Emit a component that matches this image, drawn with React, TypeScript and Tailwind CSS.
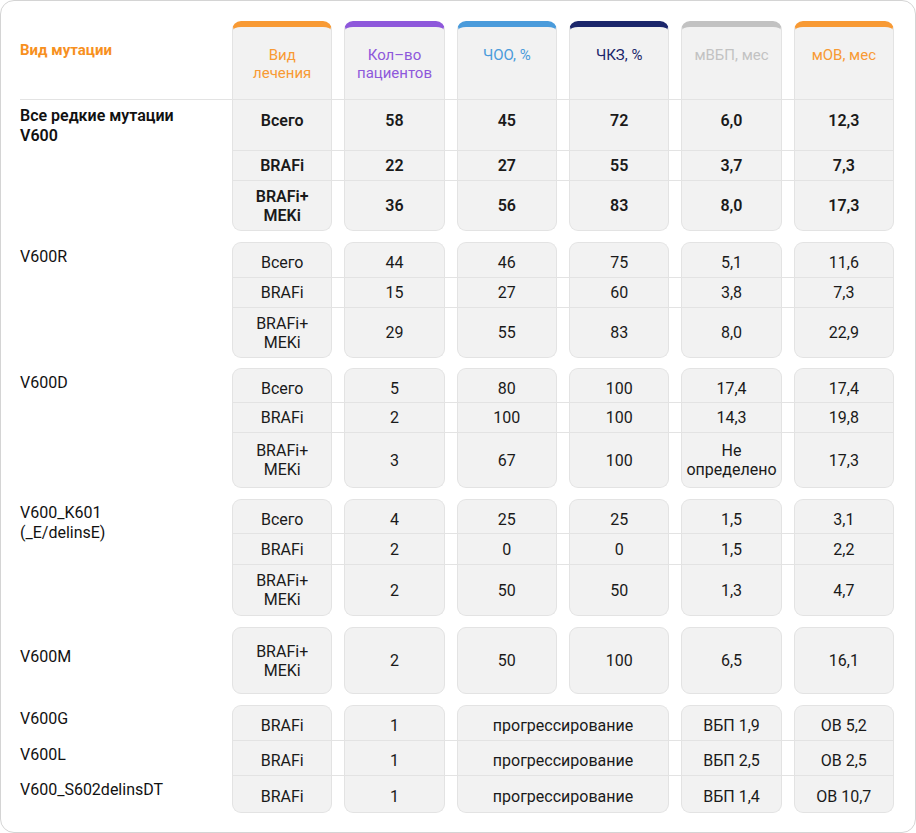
import React from "react";

type Cell = { v: string; span?: number };
type Row = { cells: Cell[]; h: string };
type Group = { label: React.ReactNode; labelPad: string; rows: Row[]; bold?: boolean };

const headers = [
  { title: "Вид\nлечения", bar: "border-t-[#f89a34]", text: "text-[#f89a34]" },
  { title: "Кол–во\nпациентов", bar: "border-t-[#8e58db]", text: "text-[#8e58db]" },
  { title: "ЧОО, %", bar: "border-t-[#4a9bdb]", text: "text-[#4a9bdb]" },
  { title: "ЧКЗ, %", bar: "border-t-[#1b266b]", text: "text-[#1b266b]" },
  { title: "мВБП, мес", bar: "border-t-[#c2c2c2]", text: "text-[#c2c2c2]" },
  { title: "мОВ, мес", bar: "border-t-[#f89a34]", text: "text-[#f89a34]" },
];

const c = (...vals: string[]): Cell[] => vals.map((v) => ({ v }));
const combo = "BRAFi+\nMEKi";

const groups: Group[] = [
  {
    label: (
      <>
        Все редкие мутации
        <br />
        V600
      </>
    ),
    labelPad: "pt-[6px]",
    bold: true,
    rows: [
      { cells: c("Всего", "58", "45", "72", "6,0", "12,3"), h: "h-[51px]" },
      { cells: c("BRAFi", "22", "27", "55", "3,7", "7,3"), h: "h-[30px]" },
      { cells: c(combo, "36", "56", "83", "8,0", "17,3"), h: "h-[50px]" },
    ],
  },
  {
    label: "V600R",
    labelPad: "pt-[5px]",
    rows: [
      { cells: c("Всего", "44", "46", "75", "5,1", "11,6"), h: "h-[36px]" },
      { cells: c("BRAFi", "15", "27", "60", "3,8", "7,3"), h: "h-[30px]" },
      { cells: c(combo, "29", "55", "83", "8,0", "22,9"), h: "h-[50px]" },
    ],
  },
  {
    label: "V600D",
    labelPad: "pt-[5px]",
    rows: [
      { cells: c("Всего", "5", "80", "100", "17,4", "17,4"), h: "h-[35px]" },
      { cells: c("BRAFi", "2", "100", "100", "14,3", "19,8"), h: "h-[30px]" },
      { cells: c(combo, "3", "67", "100", "Не\nопределено", "17,3"), h: "h-[55px]" },
    ],
  },
  {
    label: (
      <>
        V600_K601
        <br />
        (_E/delinsE)
      </>
    ),
    labelPad: "pt-[4px]",
    rows: [
      { cells: c("Всего", "4", "25", "25", "1,5", "3,1"), h: "h-[35px]" },
      { cells: c("BRAFi", "2", "0", "0", "1,5", "2,2"), h: "h-[31px]" },
      { cells: c(combo, "2", "50", "50", "1,3", "4,7"), h: "h-[51px]" },
    ],
  },
  {
    label: "V600M",
    labelPad: "pt-[20px]",
    rows: [{ cells: c(combo, "2", "50", "100", "6,5", "16,1"), h: "h-[67px]" }],
  },
];

const tail = [
  { label: "V600G", h: "h-[36px]", cells: ["BRAFi", "1", "прогрессирование", "ВБП 1,9", "ОВ 5,2"] },
  { label: "V600L", h: "h-[35px]", cells: ["BRAFi", "1", "прогрессирование", "ВБП 2,5", "ОВ 2,5"] },
  { label: "V600_S602delinsDT", h: "h-[37px]", cells: ["BRAFi", "1", "прогрессирование", "ВБП 1,4", "ОВ 10,7"] },
];

function DataCell({
  v,
  first,
  last,
  bold,
  span,
  pad,
}: {
  v: string;
  first: boolean;
  last: boolean;
  bold?: boolean;
  span?: boolean;
  pad?: string;
}) {
  return (
    <div
      className={[
        "flex items-center justify-center whitespace-pre-line border-x border-[#e3e3e3] bg-[#f2f2f2] text-center text-[16px] leading-[19px] text-[#1a1a1a]",
        bold ? "font-semibold" : "",
        first ? "rounded-t-[9px] border-t" : "",
        last ? "rounded-b-[9px] border-b" : "",
        span ? "col-span-2" : "",
        pad ?? "",
      ].join(" ")}
    >
      {v}
    </div>
  );
}

export default function App() {
  return (
    <div className="min-h-[833px] w-[916px] bg-white font-['Roboto','Liberation_Sans',sans-serif]">
      <div className="h-[833px] rounded-[14px] border border-[#d4d4d4] pb-5 pl-[19px] pr-[21px] pt-5">
        {/* header */}
        <div className="flex border-b border-[#e3e3e3]">
          <div className="w-[212px] shrink-0 pt-[19px] text-[15px] font-bold leading-5 text-[#f7901e]">
            Вид мутации
          </div>
          <div className="grid flex-1 grid-cols-6 gap-x-3">
            {headers.map((h) => (
              <div
                key={h.title}
                className={`h-[78px] whitespace-pre-line rounded-t-[9px] border-x border-t-[6px] border-x-[#e3e3e3] bg-[#f2f2f2] pt-[19px] text-center text-[15px] leading-[18px] ${h.bar} ${h.text}`}
              >
                {h.title}
              </div>
            ))}
          </div>
        </div>

        {groups.map((g, gi) => (
          <div key={gi} className={`flex ${gi === 0 ? "" : gi === 2 ? "mt-[10px]" : "mt-[11px]"}`}>
            <div
              className={`w-[212px] shrink-0 text-[16px] leading-5 text-[#111] ${g.labelPad} ${
                g.bold ? "font-semibold" : "font-normal"
              }`}
            >
              {g.label}
            </div>
            <div className="flex-1">
              {g.rows.map((r, ri) => {
                const last = ri === g.rows.length - 1;
                // first row of multi-row groups sits a little off-centre in the source
                const pad =
                  ri === 0 && g.rows.length > 1 ? (gi === 0 ? "pb-[10px]" : "pt-[5px]") : "";
                return (
                  <div
                    key={ri}
                    className={`grid grid-cols-6 gap-x-3 ${r.h} ${last ? "" : "border-b border-[#e3e3e3]"}`}
                  >
                    {r.cells.map((cell, ci) => (
                      <DataCell
                        key={ci}
                        v={cell.v}
                        first={ri === 0 && gi > 0}
                        last={last}
                        bold={g.bold}
                        pad={pad}
                      />
                    ))}
                  </div>
                );
              })}
            </div>
          </div>
        ))}

        <div className="mt-[11px]">
          {tail.map((t, ri) => {
            const last = ri === tail.length - 1;
            return (
              <div key={t.label} className="flex">
                <div className="w-[212px] shrink-0 pt-[4px] text-[16px] leading-5 text-[#111]">
                  {t.label}
                </div>
                <div
                  className={`grid flex-1 grid-cols-6 gap-x-3 ${t.h} ${
                    last ? "" : "border-b border-[#e3e3e3]"
                  }`}
                >
                  {t.cells.map((v, ci) => (
                    <DataCell
                      key={ci}
                      v={v}
                      first={ri === 0}
                      last={last}
                      span={ci === 2}
                      pad="pt-[5px]"
                    />
                  ))}
                </div>
              </div>
            );
          })}
        </div>
      </div>
    </div>
  );
}
